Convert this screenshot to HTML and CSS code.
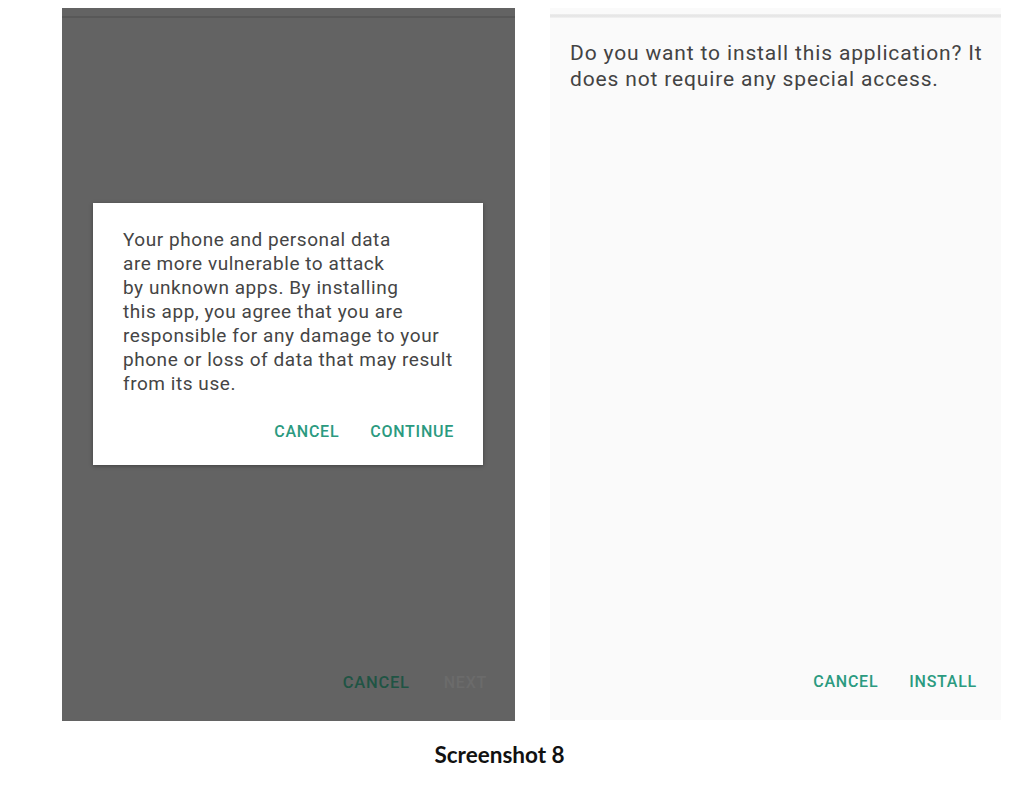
FILE: index.html
```html
<!DOCTYPE html>
<html>
<head>
<meta charset="utf-8">
<link rel="stylesheet" href="styles.css">
</head>
<body>
<div class="page">
  <div class="row">
    <div class="panel dark">
      <div class="topline"></div>
      <div class="dialog">
        <p class="dtext">Your phone and personal data<br>are more vulnerable to attack<br>by unknown apps. By installing<br>this app, you agree that you are<br>responsible for any damage to your<br>phone or loss of data that may result<br>from its use.</p>
        <div class="dbtns">
          <span class="btn">CANCEL</span>
          <span class="btn">CONTINUE</span>
        </div>
      </div>
      <div class="bbtns">
        <span class="btn dim">CANCEL</span>
        <span class="btn faint">NEXT</span>
      </div>
    </div>
    <div class="panel light">
      <div class="shadowline"></div>
      <p class="ltext">Do you want to install this application? It<br>does not require any special access.</p>
      <div class="bbtns right">
        <span class="btn">CANCEL</span>
        <span class="btn">INSTALL</span>
      </div>
    </div>
  </div>
  <div class="caption">Screenshot 8</div>
</div>
</body>
</html>
```
FILE: styles.css
```css
html, body { margin: 0; padding: 0; background: #ffffff; }
.page { width: 1027px; height: 805px; padding-top: 8px; box-sizing: border-box; font-family: Roboto, "Noto Sans", sans-serif; }
.row { display: flex; padding-left: 62px; gap: 35px; }
.panel { display: flex; flex-direction: column; box-sizing: border-box; }
.dark { width: 453px; height: 713px; background: #636363; }
.light { width: 451px; height: 712px; background: #fafafa; }
.topline { height: 2px; margin-top: 8px; background: #585858; }
.dialog { width: 390px; height: 262px; margin-top: 185px; margin-left: 31px; background: #ffffff; box-sizing: border-box; padding: 25px 30px 0 30px; display: flex; flex-direction: column; box-shadow: 0 1px 4px rgba(0,0,0,0.35); }
.dtext { margin: 0; font-size: 19px; line-height: 24px; color: #454545; letter-spacing: 0.55px; white-space: nowrap; }
.dbtns { display: flex; justify-content: flex-end; gap: 31px; margin-top: 26px; margin-right: -1px; }
.btn { font-size: 16px; font-weight: 500; color: #2b9a80; letter-spacing: 0.75px; line-height: 20px; }
.bbtns { margin-top: auto; margin-bottom: 28px; display: flex; justify-content: flex-end; gap: 34px; padding-right: 28px; }
.dim { color: #1f5444; font-size: 16.5px; }
.faint { color: #6b6b6b; }
.shadowline { height: 4px; margin-top: 6px; background: linear-gradient(#eeeeee, #e4e4e4 50%, #f3f3f3); }
.ltext { margin: 22px 0 0 20px; font-size: 21px; line-height: 26px; color: #434343; letter-spacing: 0.85px; white-space: nowrap; }
.bbtns.right { gap: 31px; padding-right: 24px; margin-bottom: 28px; }
.caption { margin-top: 20px; text-align: center; font-family: Lato, sans-serif; font-weight: 700; font-size: 22.5px; color: #111; width: 999px; }
```
